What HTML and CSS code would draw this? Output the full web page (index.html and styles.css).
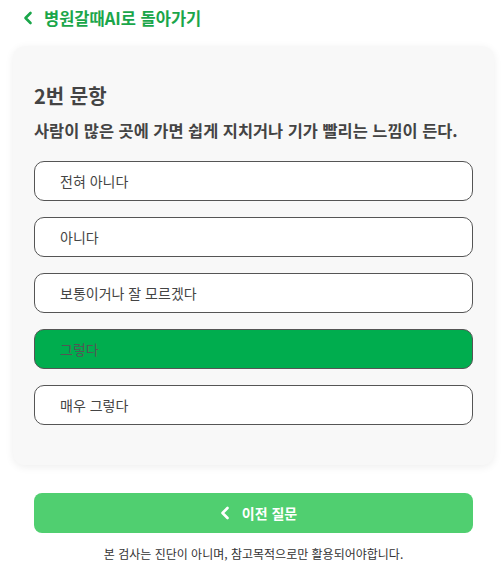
FILE: index.html
```html
<!DOCTYPE html>
<html lang="ko">
<head>
    <meta charset="UTF-8">
    <meta name="viewport" content="width=device-width, initial-scale=1.0">
    <title>문항</title>
    <link rel="stylesheet" href="styles.css">
</head>
<body>

<div class="page">
    <a class="back-link" href="#">
        <svg width="10" height="14" viewBox="0 0 10 14"><path d="M7.5 2 L2.5 7 L7.5 12" fill="none" stroke="currentColor" stroke-width="2.6" stroke-linecap="round" stroke-linejoin="round"/></svg>
        <span>병원갈때AI로 돌아가기</span>
    </a>

    <div class="card">
        <h2 class="q-num">2번 문항</h2>
        <p class="q-text">사람이 많은 곳에 가면 쉽게 지치거나 기가 빨리는 느낌이 든다.</p>
        <div class="options">
            <button class="option">전혀 아니다</button>
            <button class="option">아니다</button>
            <button class="option">보통이거나 잘 모르겠다</button>
            <button class="option selected">그렇다</button>
            <button class="option">매우 그렇다</button>
        </div>
    </div>

    <div class="nav">
        <button class="prev-btn">
            <svg width="10" height="14" viewBox="0 0 10 14"><path d="M7.5 2 L2.5 7 L7.5 12" fill="none" stroke="currentColor" stroke-width="2.6" stroke-linecap="round" stroke-linejoin="round"/></svg>
            <span>이전 질문</span>
        </button>
        <p class="notice">본 검사는 진단이 아니며, 참고목적으로만 활용되어야합니다.</p>
    </div>
</div>

</body>
</html>
```

FILE: styles.css
```css
body {
    margin: 0;
    background: #fff;
    font-family: "Noto Sans CJK KR", "Noto Sans", sans-serif;
    color: #444;
}
.page {
    padding: 0 7px 0 13px;
}
.back-link {
    display: flex;
    align-items: center;
    gap: 11px;
    height: 36px;
    padding-left: 10px;
    color: #1aa64a;
    font-size: 16.5px;
    font-weight: 700;
    text-decoration: none;
}
.back-link span {
    margin-top: -1px;
}
.card {
    margin-top: 10px;
    background: #f8f8f8;
    border-radius: 12px;
    box-shadow: 0 2px 8px rgba(0, 0, 0, 0.07);
    padding: 37px 21px 40px;
}
.q-num {
    margin: 0;
    font-size: 20px;
    line-height: 26px;
    font-weight: 700;
    color: #444;
}
.q-text {
    margin: 8px 0 0;
    font-size: 16.4px;
    line-height: 26px;
    font-weight: 700;
    color: #444;
    white-space: nowrap;
}
.options {
    display: flex;
    flex-direction: column;
    gap: 16px;
    margin-top: 18px;
}
.option {
    height: 40px;
    padding: 0 0 0 25px;
    text-align: left;
    background: #fff;
    border: 1px solid #555;
    border-radius: 10px;
    font-family: inherit;
    font-size: 14px;
    color: #444;
}
.option.selected {
    background: #00ad4e;
    color: #555;
}
.nav {
    padding: 28px 21px 0;
}
.prev-btn {
    width: 100%;
    height: 40px;
    display: flex;
    align-items: center;
    justify-content: center;
    gap: 12px;
    padding-left: 16px;
    background: #50cf70;
    color: #fff;
    border: none;
    border-radius: 8px;
    font-family: inherit;
    font-size: 14px;
    font-weight: 700;
}
.notice {
    margin: 12px 0 0;
    text-align: center;
    font-size: 12px;
    color: #333;
}
```
